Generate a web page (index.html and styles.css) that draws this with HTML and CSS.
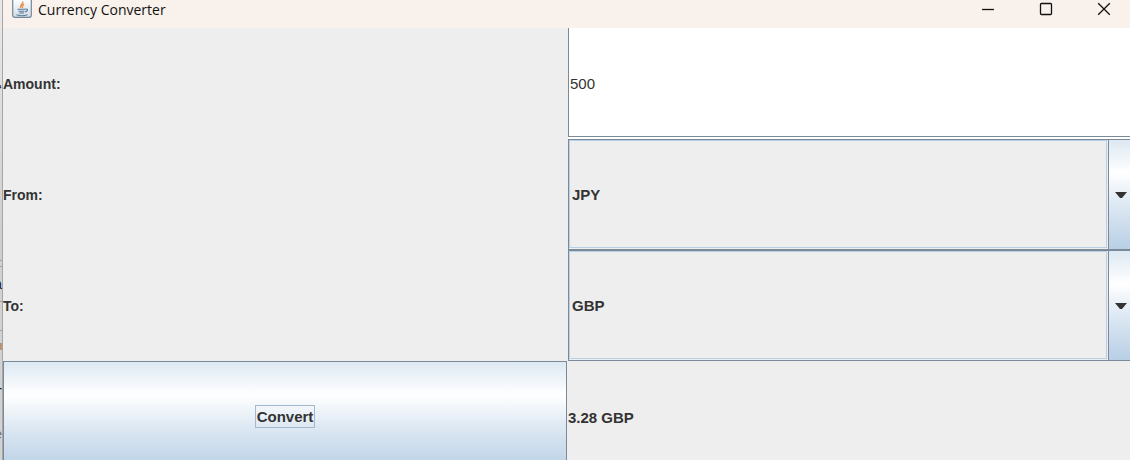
FILE: index.html
```html
<!DOCTYPE html>
<html lang="en">
<head>
<meta charset="utf-8">
<title>Currency Converter</title>
<link rel="stylesheet" href="styles.css">
</head>
<body>
<div class="desktop">
  <div class="backdrop" aria-hidden="true">
    <div class="strip strip-top">‘</div>
    <div class="strip strip-gap"></div>
    <div class="strip strip-a">a</div>
    <div class="strip strip-light"></div>
    <div class="strip strip-mark"></div>
    <div class="strip strip-t">T</div>
    <div class="strip strip-e">e</div>
  </div>
  <main class="window">
    <header class="titlebar">
      <svg class="app-icon" viewBox="0 0 20 20" aria-hidden="true">
        <defs>
          <linearGradient id="tile" x1="0" y1="0" x2="0" y2="1">
            <stop offset="0" stop-color="#ffffff"/>
            <stop offset="1" stop-color="#d3dce4"/>
          </linearGradient>
        </defs>
        <rect x=".7" y=".7" width="18.6" height="18.6" rx="2" fill="url(#tile)" stroke="#71889c" stroke-width="1.2"/>
        <path d="M10.5 3.500C12 6 7 7 8.500 10M12 6C9.500 7.500 10 8.500 10.500 10" fill="none" stroke="#e8924e" stroke-width="1.500"/>
        <path d="M5.500 11.200h8M6.500 13.200h6M7.200 15h4.800M4.500 16.800c3 1 8 1 11 0M13.500 11c3-.3 2.500 2.500-.5 3" fill="none" stroke="#557d9b" stroke-width="1.100"/>
      </svg>
      <h1 class="title">Currency Converter</h1>
      <div class="controls">
        <button class="control" type="button" aria-label="Minimize"><svg viewBox="0 0 14 14"><path d="M1 7.500h12"/></svg></button>
        <button class="control" type="button" aria-label="Maximize"><svg viewBox="0 0 14 14"><rect x="1.500" y="1.500" width="11" height="11" rx="1"/></svg></button>
        <button class="control" type="button" aria-label="Close"><svg viewBox="0 0 14 14"><path d="M1.200 1.200l11.600 11.600M12.800 1.200L1.200 12.800"/></svg></button>
      </div>
    </header>
    <form class="form">
      <label class="label" for="amount">Amount:</label>
      <div class="field"><input class="amount" id="amount" type="text" value="500"></div>
      <label class="label" for="from">From:</label>
      <div class="combo">
        <select class="select" id="from"><option>JPY</option><option>GBP</option></select>
        <span class="arrow"><svg viewBox="0 0 12 6"><path d="M0 0h12L7 6H5z"/></svg></span>
      </div>
      <label class="label" for="to">To:</label>
      <div class="combo">
        <select class="select" id="to"><option>GBP</option><option>JPY</option></select>
        <span class="arrow"><svg viewBox="0 0 12 6"><path d="M0 0h12L7 6H5z"/></svg></span>
      </div>
      <button class="convert" type="button"><span class="focus">Convert</span></button>
      <output class="result" for="amount from to">3.28 GBP</output>
    </form>
  </main>
</div>
</body>
</html>
```
FILE: styles.css
```css
* { box-sizing: border-box; }

body {
  margin: 0;
  overflow: hidden;
  background: #eeeeee;
  color: #333333;
  font: bold 15px/20px "Liberation Sans", Arial, sans-serif;
}

.desktop {
  display: grid;
  grid-template-columns: 3px 1fr;
  height: 100vh;
  margin-right: -3px;
  overflow: hidden;
}

.backdrop {
  display: flex;
  flex-direction: column;
  overflow: hidden;
  border-right: 1px solid #a6a6a6;
  background: #d2d2d2;
}

.strip {
  display: flex;
  flex: none;
  justify-content: flex-end;
  overflow: hidden;
  border-bottom: 1px solid #a0a0a0;
  color: #222222;
  font-weight: normal;
}

.strip-top { height: 261px; padding-top: 80px; background: linear-gradient(#e9e9e9, #cccccc); }
.strip-gap { height: 6px; }
.strip-a { height: 35px; padding-top: 7px; }
.strip-light { height: 29px; }
.strip-mark { height: 46px; border-bottom: 0; background: linear-gradient(#d2d2d2 12px, #bd9272 12px, #bd9272 19px, #d2d2d2 19px); }
.strip-t { height: 40px; border-bottom: 0; padding-top: 6px; }
.strip-e { height: 43px; border-bottom: 0; padding-top: 7px; color: #777777; }

.window {
  display: flex;
  flex-direction: column;
  min-width: 0;
}

.titlebar {
  display: flex;
  flex: none;
  align-items: flex-start;
  height: 28px;
  padding-left: 9px;
  overflow: hidden;
  background: #f9f1eb;
  color: #111111;
}

.app-icon { width: 20px; height: 20px; margin-top: -2px; }

.title {
  flex: 1;
  margin: 0 0 0 6px;
  font: 14px/20px "Open Sans", "Noto Sans", sans-serif;
}

.controls { display: flex; }

.control {
  display: flex;
  align-items: center;
  justify-content: center;
  width: 58px;
  height: 18px;
  border: 0;
  padding: 0;
  background: none;
}

.control svg {
  width: 14px;
  height: 14px;
  fill: none;
  stroke: #111111;
  stroke-width: 1.3;
}

.form {
  display: grid;
  grid-template-columns: 1fr 1fr;
  grid-auto-rows: 111px;
}

.label {
  display: flex;
  align-items: center;
  font-size: 14px;
}

.result {
  display: flex;
  align-items: center;
  padding-top: 2px;
}

.field {
  padding-bottom: 2px;
  background: #ffffff;
}

.amount {
  width: 100%;
  height: 100%;
  border: 1px solid #7a8a99;
  border-width: 0 0 1px 1px;
  padding: 3px 0 0 1px;
  background: #ffffff;
  color: #333333;
  font: 15px/20px "Liberation Sans", Arial, sans-serif;
  outline: 0;
}

.combo {
  display: grid;
  grid-template-columns: 1fr 24px;
  border: 1px solid #7a8a99;
}

.select {
  appearance: none;
  margin: 0 1px 1px 0;
  border: 1px solid #b8cfe5;
  border-radius: 0;
  padding: 2px 2px 0;
  background: #eeeeee;
  color: #333333;
  font: inherit;
  outline: 0;
}

.arrow {
  display: flex;
  align-items: center;
  justify-content: center;
  border-left: 1px solid #7a8a99;
  background: linear-gradient(#dde8f3, #ffffff 30%, #dde8f3 60%, #b8cfe5);
  pointer-events: none;
}

.arrow svg { width: 12px; height: 6px; fill: #333333; }

.convert {
  margin-right: 1px;
  border: 1px solid #7a8a99;
  border-radius: 0;
  padding: 0;
  background: linear-gradient(#dde8f3, #ffffff 30%, #dde8f3 60%, #b8cfe5);
  color: #333333;
  font: inherit;
}

.focus {
  display: inline-block;
  border: 1px solid #a3b8cc;
  padding: 1px 1px 0;
}
```
